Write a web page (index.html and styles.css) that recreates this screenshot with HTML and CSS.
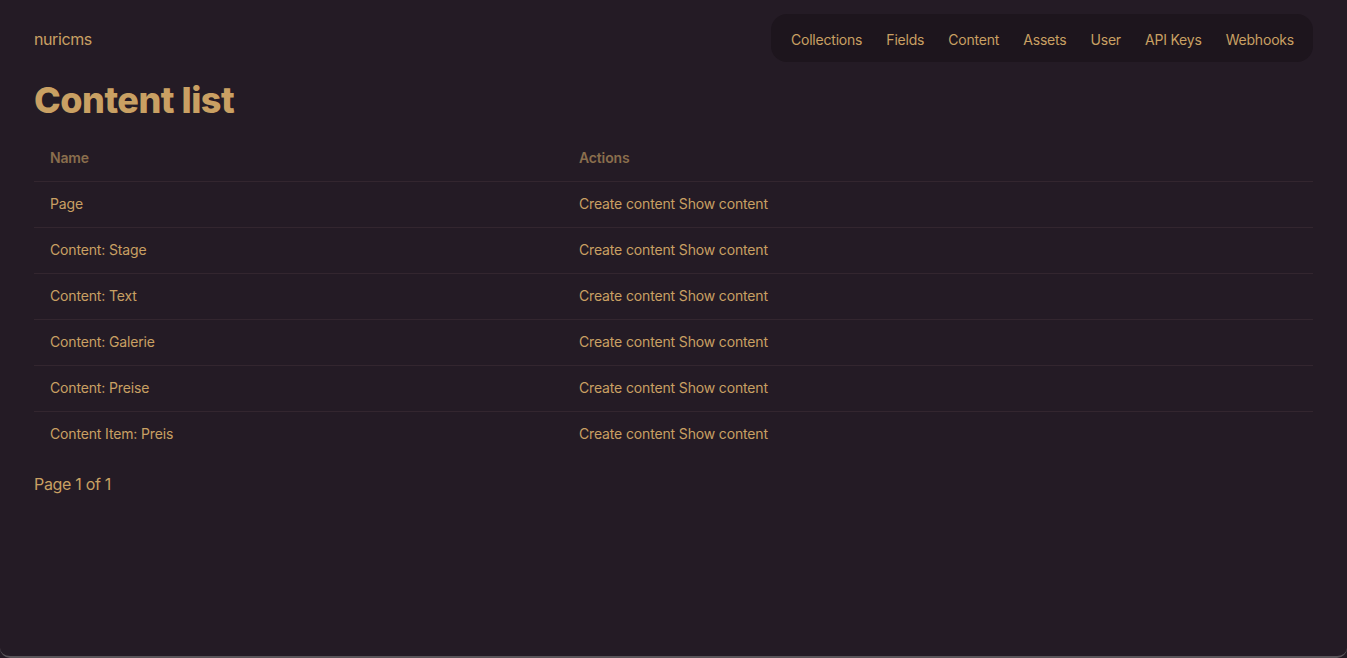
FILE: index.html
```html
<!DOCTYPE html>
<html lang="en">
<head>
<meta charset="utf-8">
<title>nuricms – Content list</title>
<link rel="stylesheet" href="styles.css">
</head>
<body>
<div class="app">
  <header class="topbar">
    <a class="brand" href="#">nuricms</a>
    <nav class="nav">
      <a href="#">Collections</a>
      <a href="#">Fields</a>
      <a href="#">Content</a>
      <a href="#">Assets</a>
      <a href="#">User</a>
      <a href="#">API Keys</a>
      <a href="#">Webhooks</a>
    </nav>
  </header>
  <main class="main">
    <h1 class="title">Content list</h1>
    <table class="list">
      <colgroup><col class="col-name"><col></colgroup>
      <thead>
        <tr><th>Name</th><th>Actions</th></tr>
      </thead>
      <tbody>
        <tr><td>Page</td><td><a href="#">Create content</a> <a href="#">Show content</a></td></tr>
        <tr><td>Content: Stage</td><td><a href="#">Create content</a> <a href="#">Show content</a></td></tr>
        <tr><td>Content: Text</td><td><a href="#">Create content</a> <a href="#">Show content</a></td></tr>
        <tr><td>Content: Galerie</td><td><a href="#">Create content</a> <a href="#">Show content</a></td></tr>
        <tr><td>Content: Preise</td><td><a href="#">Create content</a> <a href="#">Show content</a></td></tr>
        <tr><td>Content Item: Preis</td><td><a href="#">Create content</a> <a href="#">Show content</a></td></tr>
      </tbody>
    </table>
    <p class="pager">Page 1 of 1</p>
  </main>
</div>
</body>
</html>
```
FILE: styles.css
```css
* { box-sizing: border-box; }
html, body { height: 100%; }
body {
  margin: 0;
  background: #241b25;
  color: #c9a063;
  font-family: Inter, "Noto Sans", "Liberation Sans", sans-serif;
  -webkit-font-smoothing: antialiased;
}
.app {
  min-height: 100%;
  padding: 14px 34px 0 34px;
  border-bottom: 2px solid #5a555a;
  border-radius: 0 0 10px 10px;
}
a { color: inherit; text-decoration: none; }
.topbar {
  display: flex;
  align-items: center;
  justify-content: space-between;
}
.brand {
  font-size: 16px;
  letter-spacing: -0.4px;
  padding-top: 2px;
}
.nav {
  display: flex;
  align-items: center;
  gap: 24px;
  height: 48px;
  padding: 2px 19px 0 20px;
  background: #1d151d;
  border-radius: 16px;
  font-size: 14px;
  letter-spacing: -0.2px;
}
.title {
  margin: 18px 0 15px;
  font-size: 36px;
  line-height: 40px;
  font-weight: 800;
  letter-spacing: -0.5px;
}
.list {
  width: 100%;
  border-collapse: collapse;
  font-size: 14px;
  letter-spacing: -0.15px;
}
.col-name { width: 529px; }
.list th, .list td {
  text-align: left;
  padding: 0 16px;
  height: 46px;
  line-height: 20px;
}
.list th {
  font-weight: 600;
  color: #8a6e4d;
}
.list tbody tr { border-top: 1px solid #33262f; }
.pager {
  margin: 15px 0 0;
  font-size: 16px;
  line-height: 24px;
  letter-spacing: -0.3px;
}
```
